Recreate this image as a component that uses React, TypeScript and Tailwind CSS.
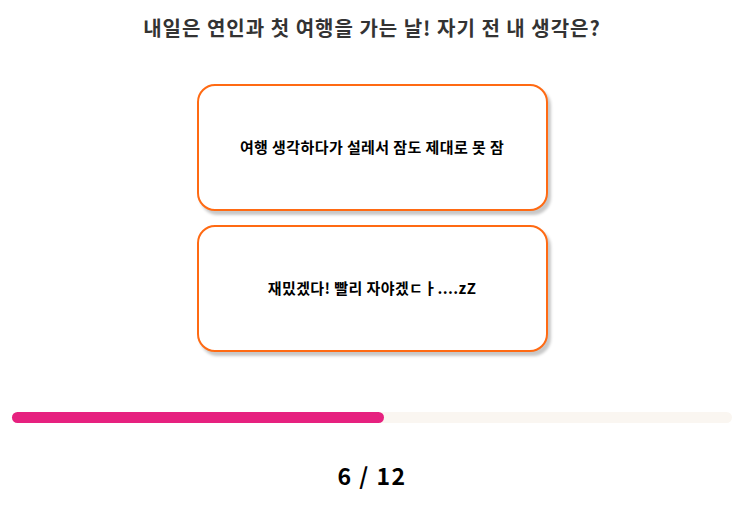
const options = [
  "여행 생각하다가 설레서 잠도 제대로 못 잠",
  "재밌겠다! 빨리 자야겠ㄷㅏ....zZ",
];

const App = () => {
  const current = 6;
  const total = 12;
  return (
    <div className="w-[740px] h-[507px] pl-1 bg-white font-['Noto_Sans_CJK_KR',sans-serif] flex flex-col items-center">
      <h1 className="mt-[13px] text-[20px] leading-[30px] tracking-[1px] font-bold text-[#333333]">
        내일은 연인과 첫 여행을 가는 날! 자기 전 내 생각은?
      </h1>
      <div className="mt-[41px] flex flex-col gap-[14px]">
        {options.map((text) => (
          <button
            key={text}
            className="w-[351px] h-[127px] bg-white border-2 border-[#FF6A13] rounded-[18px] shadow-[3px_4px_3px_#c8c8c8] flex items-center justify-center text-[15px] tracking-[0.4px] font-bold text-black"
          >
            {text}
          </button>
        ))}
      </div>
      <div className="mt-[60px] w-[720px] h-[11px] rounded-full bg-[#FAF6F1]">
        <div className="h-full rounded-full bg-[#E6217F]" style={{ width: `${(current / total) * 100 + 1.7}%` }} />
      </div>
      <div className="mt-[37px] text-[23px] tracking-[1.5px] font-bold text-black leading-[30px]">
        {current} / {total}
      </div>
    </div>
  );
};

export default App;
